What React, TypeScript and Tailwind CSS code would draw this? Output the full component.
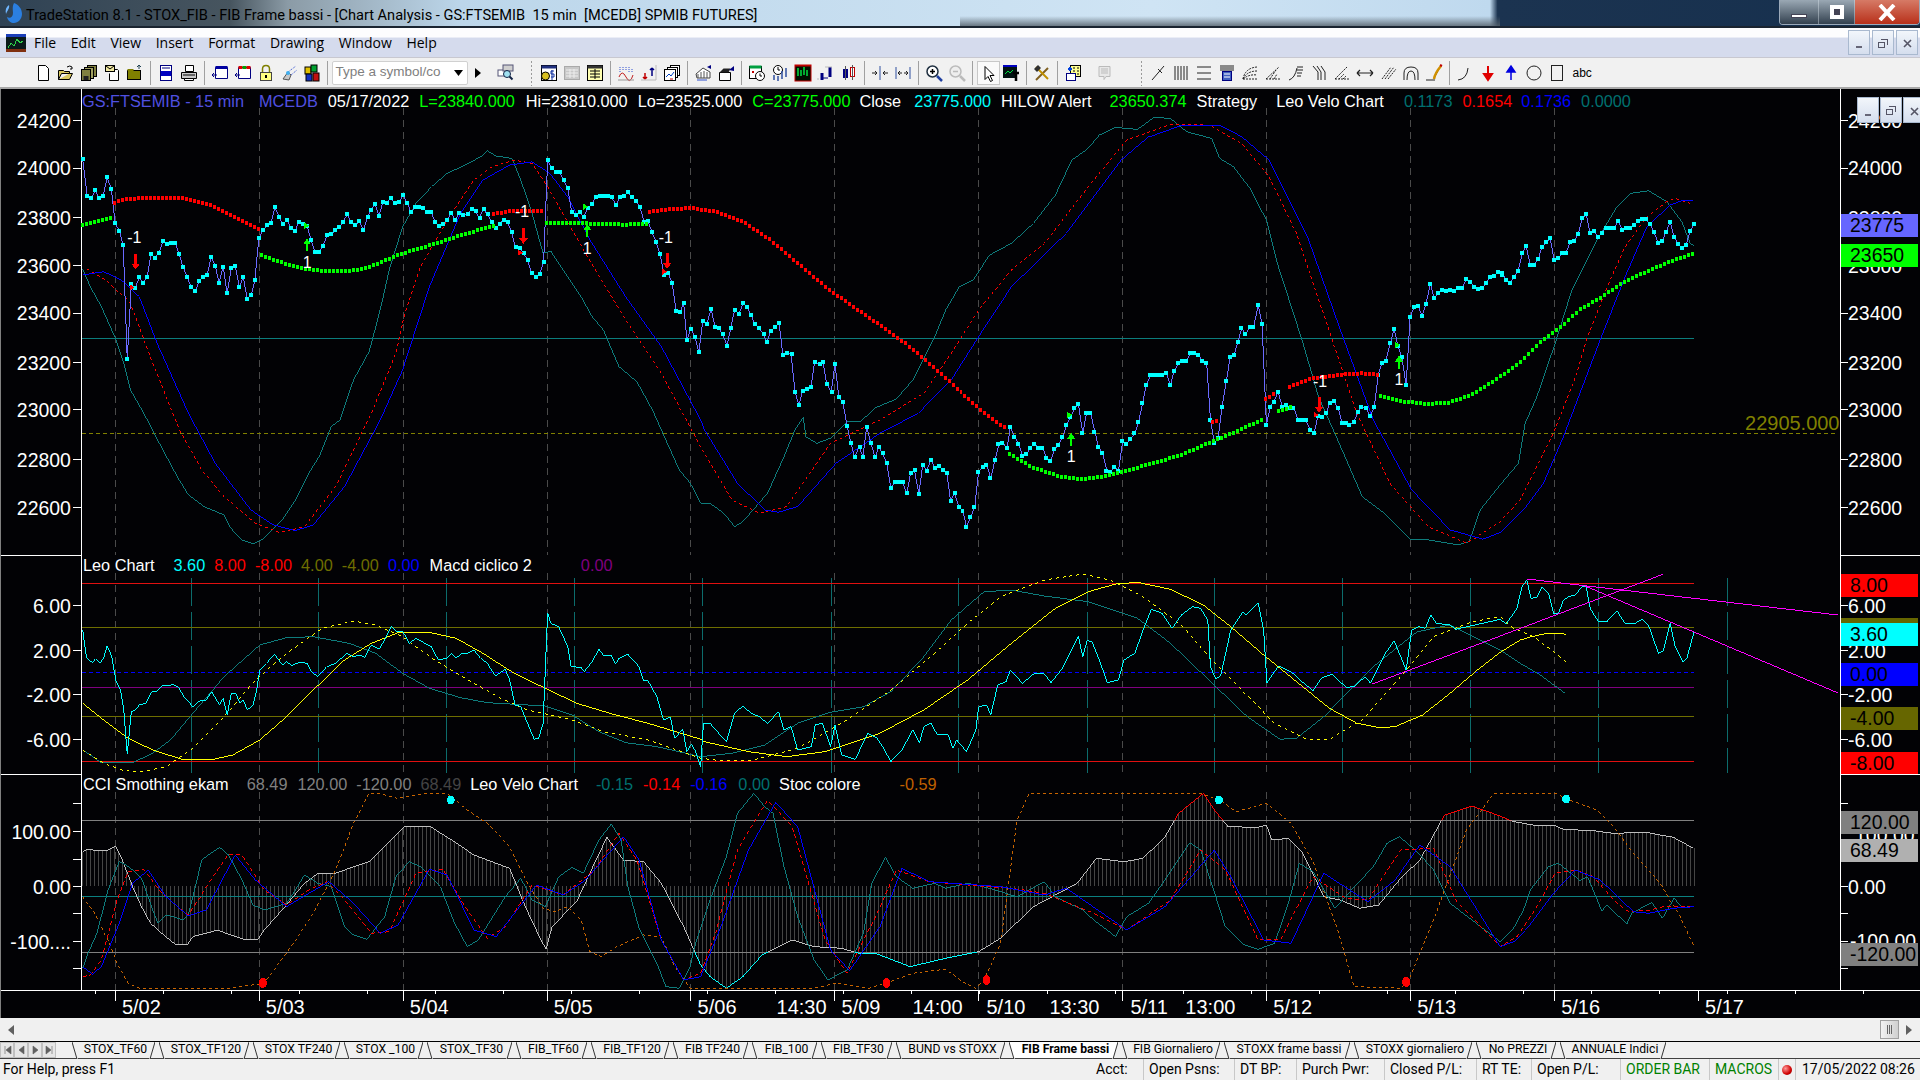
import { ReactNode } from "react";

type Pt = [number, number];

// traces were read off three crops of the chart, so each one comes in crop coordinates
const fromA = (a: number[], oy: number): Pt[] => pairs(a).map(([x, y]) => [x / 2.24, oy + y / 3]);
const fromB = (a: number[], oy: number): Pt[] => pairs(a).map(([x, y]) => [660 + (x * 860) / 1568, oy + y / 3]);
const fromC = (a: number[]): Pt[] => pairs(a).map(([x, y]) => [1500 + x / 3, 0 + y / 3]);

function pairs(a: number[]): Pt[] {
  const out: Pt[] = [];
  for (let i = 0; i + 1 < a.length; i += 2) out.push([a[i], a[i + 1]]);
  return out;
}

function join(...parts: Pt[][]): Pt[] {
  const out: Pt[] = [];
  parts.forEach((p) => p.forEach((q) => {
    if (!out.length || q[0] > out[out.length - 1][0]) out.push(q);
  }));
  return out;
}

const top3 = (a: number[], b: number[], c: number[]) => join(fromA(a, 80), fromB(b, 80), fromC(c).map(([x, y]) => [x, y + 80] as Pt));
const low3 = (a: number[], b: number[], c: number[]) => join(fromA(a, 550), fromB(b, 550), fromC(c).map(([x, y]) => [x, y + 560] as Pt));

const str = (p: Pt[]) => p.map(([x, y]) => `${x.toFixed(1)},${y.toFixed(1)}`).join(" ");

function yAt(p: Pt[], x: number) {
  for (let i = 1; i < p.length; i++) {
    if (x <= p[i][0]) {
      const t = (x - p[i - 1][0]) / (p[i][0] - p[i - 1][0]);
      return p[i - 1][1] + t * (p[i][1] - p[i - 1][1]);
    }
  }
  return p[p.length - 1][1];
}

function sample(p: Pt[]): Pt[] {
  const out: Pt[] = [];
  for (let x = p[0][0]; x <= p[p.length - 1][0]; x += 4) out.push([x, yAt(p, x)]);
  return out;
}

const price = top3(
  [183,236,193,347,202,355,211,331,220,355,229,347,238,292,247,326,256,430,265,452,274,495,283,838,292,613,301,623,310,592,319,608,328,590,336,523,345,533,354,519,363,482,372,492,381,488,390,488,399,521,408,561,417,590,426,622,435,634,444,604,453,592,462,585,471,532,480,558,489,608,498,560,507,640,516,563,525,557,534,622,543,592,552,657,561,645,569,601,578,473,587,451,596,435,605,430,614,381,623,410,632,433,641,420,650,445,659,452,668,425,677,432,686,438,695,480,704,516,713,515,722,497,731,466,740,463,749,451,758,440,767,425,776,403,785,425,794,435,803,424,812,451,821,412,829,390,838,372,847,408,856,367,865,368,874,354,883,370,892,367,901,346,910,368,919,397,928,380,937,381,946,385,955,395,964,397,973,425,982,438,991,431,1000,420,1009,400,1018,420,1027,398,1036,406,1045,401,1054,388,1063,393,1072,414,1081,388,1090,403,1099,425,1108,445,1117,432,1126,420,1135,425,1144,456,1153,502,1162,505,1171,518,1180,541,1189,578,1198,591,1207,583,1216,546,1225,240,1234,265,1243,275,1252,275,1261,300,1270,325,1279,397,1288,405,1297,395,1306,410,1315,385,1324,372,1333,350,1342,348,1351,347,1360,348,1369,352,1378,375,1387,352,1396,347,1405,337,1414,352,1423,362,1432,380,1441,425,1450,422,1459,456,1468,485,1477,522,1486,585,1495,578,1504,608,1513,692,1522,695,1530,670,1537,780,1546,748,1555,770,1564,815],
  [77,722,84,732,92,688,99,740,106,745,113,762,121,798,128,743,135,690,143,703,150,670,157,680,165,705,172,733,179,745,187,762,194,787,201,752,208,742,216,730,223,825,230,818,238,822,245,935,252,976,259,932,267,928,274,922,281,845,289,853,296,845,303,912,311,937,318,852,325,952,332,965,340,1037,347,1090,354,1132,362,1100,369,1130,376,1040,383,1088,391,1132,398,1102,405,1120,412,1148,420,1224,427,1207,434,1205,441,1207,449,1240,456,1180,463,1170,471,1242,478,1155,485,1172,493,1140,500,1165,507,1158,515,1170,522,1180,529,1263,536,1240,544,1280,551,1292,558,1340,566,1310,573,1280,580,1175,588,1160,595,1155,602,1195,610,1140,617,1092,624,1088,632,1105,638,1040,646,1072,653,1092,660,1128,668,1122,675,1103,682,1092,690,1104,697,1103,704,1135,711,1143,719,1108,726,1095,733,1072,741,1035,748,1010,755,985,762,972,770,1060,777,998,784,998,792,1055,799,1102,806,1120,814,1172,821,1177,828,1160,835,1172,843,1082,850,1092,857,1078,865,1060,872,1025,879,970,886,915,894,884,901,884,908,884,916,884,923,880,930,915,937,872,945,850,952,842,959,842,967,820,974,818,981,824,988,843,996,850,1003,1020,1010,1088,1017,1075,1024,980,1032,903,1039,830,1046,825,1053,785,1060,745,1067,762,1075,740,1082,740,1090,675,1097,732,1105,1035,1112,980,1119,965,1126,935,1134,980,1141,975,1148,985,1155,985,1163,1020,1170,1020,1177,1020,1185,1050,1192,1060,1199,1008,1207,1012,1214,1000,1221,968,1228,963,1236,985,1243,1028,1250,1030,1257,1035,1265,1025,1272,995,1279,982,1287,985,1294,1008,1302,980,1309,885,1316,850,1323,843,1331,790,1338,748,1345,798,1352,830,1360,915,1367,712,1374,682,1382,678,1389,708,1396,672,1404,612,1411,655,1418,638,1426,630,1433,632,1440,630,1447,633,1455,625,1462,625,1470,597,1477,605,1484,622,1491,628,1499,625,1506,610,1513,592,1521,587,1528,575,1535,585],
  [6,578,18,600,30,608,42,590,54,572,66,520,78,498,90,555,102,555,114,537,126,500,138,487,150,475,162,540,174,533,186,520,198,518,210,485,222,482,234,463,246,415,258,403,270,460,282,452,294,472,306,458,318,443,330,443,342,443,354,422,366,450,378,443,390,443,402,435,414,422,426,418,438,418,450,432,462,457,474,490,486,482,498,455,510,425,522,470,534,493,546,503,558,495,570,452,582,432],
);

const greens: Pt[][] = [
  fromA([183,435,205,428,228,420,250,411], 80),
  fromA([585,525,620,543,660,560,690,568,720,573,775,573,810,568,850,548,890,525,940,505,990,484,1040,462,1080,447,1108,437], 80),
  fromA([1222,429,1300,429,1340,432,1400,434,1450,431], 80),
  fromB([638,1122,680,1162,730,1190,770,1197,810,1190,850,1172,900,1150,950,1125,1000,1090,1050,1055,1100,1018], 80),
  fromB([1128,993,1155,980], 80),
  join(fromB([1315,947,1360,965,1400,972,1440,968,1480,945,1520,905,1568,850], 80), fromC([60,845,120,788,180,745,240,690,300,655,360,615,420,585,480,558,540,535,585,520]).map(([x, y]) => [x, y + 80] as Pt)),
];
const reds: Pt[][] = [
  fromA([255,368,280,358,320,353,370,353,400,354,430,360,470,376,510,400,550,430,580,448], 80),
  fromA([1105,402,1140,394,1180,392,1220,393], 80),
  join(fromA([1453,395,1500,388,1540,384], 80), fromB([60,385,100,395,150,425,200,480,250,550,300,620,350,680,400,735,450,795,500,865,550,940,600,1010,635,1050], 80)),
  fromB([1008,1025,1020,1022], 80),
  fromB([1105,958,1125,938], 80),
  fromB([1148,920,1190,895,1240,884,1280,880,1310,884], 80),
];

const topTeal = top3(
  [183,566,200,620,225,680,255,770,275,850,290,930,320,1000,345,1065,365,1115,395,1190,420,1245,455,1280,500,1305,515,1345,540,1380,565,1392,590,1375,630,1320,660,1260,690,1180,715,1125,740,1040,760,1020,790,900,825,815,840,740,855,660,870,570,900,440,930,370,965,320,1000,280,1040,255,1075,230,1090,212,1110,228,1145,235,1165,300,1190,400,1215,520,1232,513,1270,590,1300,650,1325,710,1350,750,1385,860,1425,905,1460,990,1490,1080,1520,1170,1545,1210,1568,1270],
  [90,1270,115,1300,135,1340,150,1325,195,1240,225,1130,245,1050,260,1012,265,1070,285,1090,310,1075,340,1025,365,1025,390,985,430,957,460,900,500,770,520,690,545,620,570,600,600,525,640,490,680,430,720,345,750,240,780,205,800,165,830,142,870,148,900,112,930,115,960,155,1005,175,1020,235,1045,260,1075,325,1105,420,1125,550,1170,780,1200,950,1235,1080,1280,1250,1320,1300,1368,1378,1400,1380,1455,1395,1475,1385,1495,1290],
  [0,1215,55,1150,75,1030,110,950,165,790,215,630,285,490,350,380,390,340,445,332,500,365,545,425,570,490,582,497],
);
const topRed = top3(
  [192,566,235,600,290,670,340,850,400,1050,450,1170,500,1250,570,1330,625,1358,680,1340,750,1220,830,1000,885,820,905,700,940,560,1000,420,1060,300,1100,260,1150,240,1190,250,1225,320,1310,520,1400,720,1480,880,1568,1100],
  [130,1260,180,1300,230,1280,310,1090,400,1020,480,940,530,820,580,690,640,570,700,490,790,300,850,180,930,133,1000,135,1060,190,1110,290,1160,460,1225,780,1270,1000,1330,1210,1400,1340,1470,1390],
  [0,1325,60,1260,160,1060,230,880,260,775,330,600,375,500,440,410,500,365,525,355,570,370],
);
const topBlue = top3(
  [183,585,230,575,270,600,310,650,350,790,420,1000,480,1150,560,1290,610,1335,660,1352,700,1335,770,1220,850,1020,900,870,960,620,1030,400,1080,300,1140,255,1190,245,1230,280,1270,350,1320,480,1400,650,1480,800,1568,1020],
  [80,1050,140,1210,190,1290,215,1297,250,1280,320,1150,400,1060,470,1000,530,900,580,770,640,620,740,460,840,240,890,170,950,135,1020,135,1060,170,1110,240,1180,470,1240,750,1300,1020,1370,1230,1440,1350,1500,1378],
  [0,1358,70,1290,130,1210,190,1070,300,780,375,590,440,440,510,375,550,360,580,362],
);

const midCyan = low3(
  [183,240,192,325,205,338,212,326,222,338,230,325,238,287,248,318,258,395,268,420,275,480,283,612,292,485,301,480,310,465,325,460,338,425,348,425,362,405,375,408,385,403,398,412,410,440,430,470,445,453,460,450,472,425,490,465,498,445,507,495,516,430,527,432,535,460,543,450,552,480,565,465,573,420,580,360,595,340,613,312,625,335,632,345,640,335,652,347,668,337,686,340,695,365,710,380,730,350,750,340,775,310,790,320,805,315,815,322,830,285,848,298,875,230,885,243,900,243,915,280,930,265,950,280,965,290,980,330,1000,325,1010,310,1020,325,1030,312,1045,310,1060,300,1075,325,1090,340,1108,378,1130,358,1140,390,1152,465,1165,470,1180,520,1195,568,1205,565,1215,520,1225,188,1232,220,1250,230,1270,290,1278,350,1300,352,1307,365,1325,335,1340,298,1350,315,1368,316,1377,343,1385,325,1405,313,1430,350,1440,392,1450,392,1470,440,1485,510,1500,500,1510,565,1528,538,1537,605,1547,583,1555,600,1568,650],
  [78,520,90,520,105,548,120,575,135,490,150,468,165,490,180,500,195,520,215,485,225,540,238,530,250,600,275,590,282,525,295,520,310,590,318,525,330,615,355,628,378,550,395,565,405,590,420,635,440,600,460,540,472,580,480,530,493,520,505,555,525,555,533,595,540,570,558,605,575,540,580,470,595,465,602,495,615,405,630,395,638,360,660,400,682,370,700,372,712,398,733,355,762,258,770,320,778,272,787,275,800,330,815,398,835,390,845,330,865,310,880,240,895,178,915,190,933,235,950,195,970,170,985,175,998,210,1003,350,1013,388,1022,375,1040,240,1062,185,1068,195,1090,160,1100,240,1106,398,1127,348,1150,365,1170,395,1190,422,1205,385,1225,372,1250,412,1265,410,1285,380,1295,400,1320,315,1338,272,1360,360,1370,240,1382,230,1395,235,1405,195,1415,220,1440,225,1450,238],
  [0,178,18,192,50,145,65,80,80,60,92,115,110,112,125,80,145,100,160,160,175,160,190,120,205,110,225,105,245,80,258,80,270,145,295,185,320,185,350,152,375,190,405,190,425,178,445,195,475,280,490,272,510,190,525,260,548,305,560,295,582,215],
);
const midYellow = low3(
  [183,460,230,510,285,565,340,600,410,630,470,630,520,615,580,570,640,500,700,420,770,330,830,280,890,248,960,247,1020,265,1080,310,1150,370,1220,415,1290,460,1370,492,1450,520,1568,568],
  [80,575,160,605,230,620,300,605,400,550,480,480,560,390,640,280,720,175,780,125,830,102,870,97,930,118,990,165,1040,230,1100,315,1160,395,1220,475,1270,520,1310,533,1340,530,1390,495,1440,430,1490,360],
  [0,277,60,240,100,228,140,220,180,220,198,223],
);
const midYellowDash = low3(
  [183,600,230,640,270,660,310,667,370,650,430,595,500,500,570,390,640,310,720,235,790,213,840,225,900,260,960,320,1040,385,1120,445,1180,480,1280,510,1350,545,1450,570,1568,625],
  [110,632,170,630,250,595,340,510,420,420,500,310,560,220,620,140,700,90,770,72,820,90,880,140,950,225,1000,320,1060,420,1120,520,1180,570,1220,568,1280,510,1350,380,1410,260,1480,215],
  [0,170,40,205,100,230,160,275,198,307],
);
const midTeal = low3(
  [183,600,225,638,295,638,340,610,380,570,430,490,500,380,580,285,640,263,700,260,780,280,840,310,900,370,960,415,1030,443,1090,458,1150,463,1220,468,1280,495,1340,545,1400,578,1470,590,1568,620],
  [130,610,190,585,250,520,310,487,370,470,420,425,480,320,530,210,590,125,640,120,700,138,780,155,870,205,930,280,1000,390,1070,500,1130,568,1160,565,1210,500,1300,350,1380,245,1440,225],
  [0,270,60,310,120,345,195,400],
);

const cci = low3(
  [183,905,195,897,215,902,240,900,257,888,272,930,295,1010,315,1070,335,1120,360,1150,392,1185,418,1183,430,1160,460,1150,485,1140,515,1155,550,1170,575,1170,590,1140,630,1080,680,1000,710,970,750,970,790,950,825,935,860,890,905,830,960,828,1010,870,1060,915,1100,935,1140,955,1175,1070,1210,1170,1222,1197,1235,1130,1290,1055,1330,940,1358,862,1395,930,1440,935,1480,1000,1530,1130,1568,1245],
  [90,1280,120,1315,150,1280,185,1215,240,1170,280,1190,330,1195,365,1212,395,1212,455,1250,520,1225,580,1205,620,1165,680,1070,720,1035,760,1000,795,925,845,935,880,925,920,860,945,790,990,730,1010,780,1035,830,1090,832,1105,825,1115,870,1145,865,1170,905,1210,1040,1240,1050,1275,1075,1310,1065,1350,985,1385,930,1430,795,1480,768],
  [0,768,40,785,100,795,160,795,190,808,280,812,340,820,440,817,480,825,520,832,580,865],
);
const lowTeal = low3(
  [183,1255,195,1210,215,1150,240,1020,265,935,280,945,295,960,315,985,340,1080,352,1120,370,1095,385,1100,407,1110,420,1095,450,930,470,910,490,892,510,915,540,990,565,1065,590,1080,615,1070,640,1060,660,1020,680,975,710,1000,740,1010,770,1130,790,1155,820,1168,860,1100,885,980,915,935,940,950,985,1010,1015,1115,1045,1190,1070,1170,1100,1105,1130,1040,1165,985,1190,1050,1220,1070,1250,980,1280,952,1305,970,1340,870,1368,822,1390,870,1405,1010,1430,1135,1470,1240,1490,1310,1520,1315,1545,1250],
  [45,1290,60,1200,90,1050,120,920,140,790,170,730,190,770,205,790,225,950,250,1100,280,1230,305,1290,340,1260,370,1150,385,1000,410,922,430,980,460,1015,500,1000,520,1015,560,1000,600,1015,650,1040,700,995,720,1040,770,1080,790,1110,830,1160,850,1100,890,1060,920,990,965,878,985,900,1005,1000,1030,1130,1065,1185,1090,1198,1120,1180,1145,1060,1165,940,1190,965,1230,1075,1260,1020,1300,950,1325,880,1348,860,1380,905,1410,960,1440,1060],
  [0,1145,40,1105,70,1050,90,990,145,920,175,910,240,962,262,950,305,1053,320,1035,380,1092,395,1060,455,1027,487,1075,522,1015,545,1042,582,1040],
);
const lowRed = low3(
  [183,1280,200,1275,225,1230,260,1050,285,965,320,958,360,1030,420,1095,465,1000,510,912,540,915,590,1020,640,1065,690,1020,730,995,770,1050,830,1150,870,1145,930,970,990,957,1040,1070,1090,1165,1130,1130,1190,1005,1260,1035,1330,960,1385,850,1425,930,1480,1170,1530,1290,1568,1270],
  [100,1150,140,900,195,750,240,830,300,1170,340,1270,395,1090,430,960,490,995,560,1005,640,1015,700,1030,790,1090,850,1140,930,1050,985,900,1030,960,1090,1170,1130,1170,1190,980,1250,1045,1290,1050,1350,900,1410,895,1450,1050],
  [0,1160,50,1130,110,1040,165,940,225,930,280,950,340,1020,385,1055,450,1050,490,1040,582,1040],
);
const lowBlue = low3(
  [183,1250,205,1273,225,1250,265,1120,295,1000,330,960,370,1040,420,1098,460,1080,525,915,570,990,640,1070,690,1030,735,995,790,1060,850,1150,890,1125,960,957,1000,975,1060,1140,1110,1160,1200,1005,1260,1035,1310,990,1395,860,1430,930,1480,1170,1530,1290,1568,1280],
  [110,1130,160,900,210,757,250,830,310,1200,345,1262,400,1130,440,955,490,995,620,1010,700,1035,740,1015,850,1140,920,1070,1010,900,1040,980,1100,1170,1150,1180,1210,970,1290,1055,1340,990,1385,885,1440,950],
  [0,1160,40,1145,85,1100,160,1000,225,930,300,960,400,1055,445,1060,520,1045,582,1040],
);
const stoc = low3(
  [183,1040,210,1090,240,1170,260,1240,285,1300,310,1315,510,1315,590,1300,650,1190,700,1090,750,960,790,820,825,730,850,730,885,745,950,730,1000,730,1045,780,1095,825,1140,890,1180,1000,1215,1075,1240,1085,1270,1070,1300,1110,1320,1205,1345,1220,1380,1190,1440,1155,1480,1160,1510,1250,1545,1315,1568,1315],
  [280,1315,320,1300,380,1315,410,1300,460,1270,520,1258,555,1300,575,1315,590,1290,620,1180,650,810,672,730,985,730,1020,750,1050,785,1105,760,1150,820,1190,935,1235,1140,1265,1310,1350,1315,1365,1290,1410,1110,1470,840,1520,730],
  [0,700,165,700,200,717,290,750,340,800,400,880,480,970,540,1070,582,1160],
);

const dayLines = [115, 259, 403, 547, 690, 834, 978, 1122, 1266, 1410, 1554];
const cycleLines = [190.5, 318, 446, 574, 702, 830.5, 958, 1087, 1214.5, 1342, 1470.5, 1598, 1727];

function Poly({ p, c, d, w = 1 }: { p: Pt[]; c: string; d?: string; w?: number }) {
  return <polyline points={str(p)} fill="none" stroke={c} strokeWidth={w} strokeDasharray={d} />;
}

function HLine({ y, c, x2 = 1694, d }: { y: number; c: string; x2?: number; d?: string }) {
  return <line x1={81} x2={x2} y1={y} y2={y} stroke={c} strokeDasharray={d} />;
}

function DayLines({ y1, y2 }: { y1: number; y2: number }) {
  return (
    <>
      {dayLines.map((x) => (
        <line key={x} x1={x} x2={x} y1={y1} y2={y2} stroke="#4a4a4a" strokeDasharray="7 5" />
      ))}
    </>
  );
}

function AxisLabel({ x, y, t, anchor }: { x: number; y: number; t: string; anchor?: "end" | "start" }) {
  return <text x={x} y={y + 7} fill="#fff" fontSize={19.5} textAnchor={anchor}>{t}</text>;
}

function Tag({ y, bg, t, h = 23 }: { y: number; bg: string; t: string; h?: number }) {
  return (
    <g>
      <rect x={1841} y={y} width={77} height={h} fill={bg} />
      <text x={1850} y={y + 18} fill="#000" fontSize={19.5}>{t}</text>
    </g>
  );
}

function Frame({ y, children }: { y: number; children: ReactNode }) {
  return (
    <>
      <line x1={80.5} x2={80.5} y1={y} y2={1000} stroke="#fff" />
      <line x1={1840.5} x2={1840.5} y1={y} y2={1000} stroke="#fff" />
      {children}
    </>
  );
}

function DownArrow({ x, y }: { x: number; y: number }) {
  return <path d={`M${x - 1.5} ${y}h3v9.5h3l-4.5 6-4.5-6h3z`} fill="#ff0000" />;
}

function UpArrow({ x, y }: { x: number; y: number }) {
  return <path d={`M${x} ${y}l4 6h-3v7h-2v-7h-3z`} fill="#00ff00" />;
}

function Legend({ items }: { items: [string, string, string][] }) {
  return (
    <div className="absolute left-0 top-0 flex w-full items-center whitespace-nowrap text-[16.3px] leading-none">
      {items.map(([t, color, cls], i) => (
        <span key={i} className={`${cls} ${color}`}>{t}</span>
      ))}
    </div>
  );
}

function TopPanel() {
  const a7 = (x: number) => x / 2.24;
  const a9 = (x: number) => 660 + (x * 860) / 1568;
  const y3 = (y: number) => 80 + y / 3;
  return (
    <div className="relative h-[466px]">
      <svg className="block h-full w-full" viewBox="0 89 1920 466" shapeRendering="crispEdges">
        <Frame y={89}>
          <DayLines y1={108} y2={555} />
          <HLine y={339} c="#0b7d7d" />
          <HLine y={434} c="#808000" x2={1837} d="4 3" />
          <Poly p={topTeal} c="#0e7c7c" />
          <Poly p={topRed} c="#ff0000" d="3 3" />
          <Poly p={topBlue} c="#0000ff" />
          <Poly p={price} c="#6a6aff" />
          {price.map(([x, y], i) => <rect key={i} x={Math.round(x) - 2} y={Math.round(y) - 2} width={4} height={4} fill="#00ffff" />)}
          {greens.map((g, i) => sample(g).map(([x, y], j) => <rect key={`${i}-${j}`} x={Math.round(x) - 2} y={Math.round(y) - 2} width={3} height={4} fill="#00ff00" />))}
          {reds.map((g, i) => sample(g).map(([x, y], j) => <rect key={`${i}-${j}`} x={Math.round(x) - 2} y={Math.round(y) - 2} width={3} height={4} fill="#ff0000" />))}
          {[[a7(680), y3(437)], [a7(1305), y3(380)], [a9(742), y3(1005)], [a9(1340), y3(795)]].map(([x, y]) => (
            <path key={x} d={`M${x} ${y - 3}l5 3-5 3z`} fill="#00ff00" />
          ))}
          {[[a7(293), y3(622)], [a7(1163), y3(518)], [a7(1487), y3(575)], [a9(1195), y3(1005)]].map(([x, y]) => (
            <path key={x} d={`M${x - 2} ${y - 3}l5 3-5 3z`} fill="#ff0000" />
          ))}
          <DownArrow x={a7(302)} y={y3(522)} />
          <DownArrow x={a7(1171)} y={y3(445)} />
          <DownArrow x={a7(1493)} y={y3(520)} />
          <DownArrow x={a9(1201)} y={y3(952)} />
          <UpArrow x={a7(686)} y={y3(475)} />
          <UpArrow x={a7(1314)} y={y3(432)} />
          <UpArrow x={a9(749)} y={y3(1058)} />
          <UpArrow x={a9(1347)} y={y3(827)} />
          <g fill="#fff" fontSize={16} textAnchor="middle">
            <text x={a7(299)} y={y3(490)}>-1</text>
            <text x={a7(1168)} y={y3(412)}>-1</text>
            <text x={a7(1490)} y={y3(488)}>-1</text>
            <text x={a9(1203)} y={y3(920)}>-1</text>
            <text x={a7(686)} y={y3(565)}>1</text>
            <text x={a7(1314)} y={y3(522)}>1</text>
            <text x={a9(749)} y={y3(1146)}>1</text>
            <text x={a9(1347)} y={y3(915)}>1</text>
          </g>
          <text x={1745} y={430} fill="#808000" fontSize={20}>22905.000</text>
          {[[24200, 120.7], [24000, 168.3], [23800, 217.7], [23600, 265.7], [23400, 313.3], [23200, 362.7], [23000, 410], [22800, 459.7], [22600, 507.7]].map(([v, y]) => (
            <g key={v}>
              <line x1={72} x2={80} y1={y} y2={y} stroke="#fff" />
              <line x1={1841} x2={1848} y1={y} y2={y} stroke="#fff" />
              <AxisLabel x={70} y={y} t={String(v)} anchor="end" />
              <AxisLabel x={1848} y={y} t={String(v)} />
            </g>
          ))}
          <Tag y={214} bg="#6666ff" t="23775" />
          <Tag y={244} bg="#00ff00" t="23650" />
        </Frame>
      </svg>
      <Legend
        items={[
          ["GS:FTSEMIB - 15 min", "text-[#5050e0]", "ml-[81px] mt-[4px]"],
          ["MCEDB", "text-[#5050e0]", "ml-[15px] mt-[4px]"],
          ["05/17/2022", "text-white", "ml-[10px] mt-[4px]"],
          ["L=23840.000", "text-[#00ff00]", "ml-[10px] mt-[4px]"],
          ["Hi=23810.000", "text-white", "ml-[11px] mt-[4px]"],
          ["Lo=23525.000", "text-white", "ml-[10px] mt-[4px]"],
          ["C=23775.000", "text-[#00ff00]", "ml-[10px] mt-[4px]"],
          ["Close", "text-white", "ml-[9px] mt-[4px]"],
          ["23775.000", "text-[#00ffff]", "ml-[13px] mt-[4px]"],
          ["HILOW Alert", "text-white", "ml-[10px] mt-[4px]"],
          ["23650.374", "text-[#00ff00]", "ml-[18px] mt-[4px]"],
          ["Strategy", "text-white", "ml-[10px] mt-[4px]"],
          ["Leo Velo Chart", "text-white", "ml-[19px] mt-[4px]"],
          ["0.1173", "text-[#007070]", "ml-[20px] mt-[4px]"],
          ["0.1654", "text-[#ff0000]", "ml-[10px] mt-[4px]"],
          ["0.1736", "text-[#0000ff]", "ml-[9px] mt-[4px]"],
          ["0.0000", "text-[#007070]", "ml-[10px] mt-[4px]"],
        ]}
      />
      <div className="absolute right-0 top-[8px] flex h-[26px] w-[63px] gap-[1px] overflow-hidden">
        <MiniBtn>
          <span className="mt-[9px] h-[2px] w-[6px] bg-[#667]" />
        </MiniBtn>
        <MiniBtn>
          <RestoreGlyph />
        </MiniBtn>
        <MiniBtn>
          <CloseGlyph />
        </MiniBtn>
      </div>
    </div>
  );
}

function MidPanel() {
  return (
    <div className="relative h-[219px]">
      <svg className="block h-full w-full" viewBox="0 555 1920 219" shapeRendering="crispEdges">
        <Frame y={555}>
          <line x1={0} x2={81} y1={555.5} y2={555.5} stroke="#fff" />
          <line x1={1840} x2={1920} y1={555.5} y2={555.5} stroke="#fff" />
          <DayLines y1={573} y2={774} />
          {cycleLines.map((x) => <line key={x} x1={x} x2={x} y1={578} y2={773} stroke="#0c6c6c" strokeDasharray="28 6" />)}
          <HLine y={583.5} c="#e01010" />
          <HLine y={627.5} c="#6e6e00" />
          <HLine y={672.5} c="#0000ff" d="4 3" />
          <HLine y={687.5} c="#800080" />
          <HLine y={716.5} c="#6e6e00" />
          <HLine y={761.5} c="#e01010" />
          <Poly p={midTeal} c="#0e7c7c" />
          <Poly p={midYellowDash} c="#ffff00" d="3 4" />
          <Poly p={midYellow} c="#ffff00" />
          <Poly p={midCyan} c="#00ffff" />
          <Poly p={[[1372, 684], [1500, 636], [1662.7, 574.3]]} c="#ff00ff" />
          <Poly p={[[1527, 579], [1838, 615]]} c="#ff00ff" />
          <Poly p={[[1585, 586], [1838, 693]]} c="#ff00ff" />
          {[[6, 605.5], [2, 650.5], [-2, 695], [-6, 740]].map(([v, y]) => {
            const t = `${v.toFixed(2)}`;
            return (
              <g key={v}>
                <line x1={72} x2={80} y1={y} y2={y} stroke="#fff" />
                <line x1={1841} x2={1848} y1={y} y2={y} stroke="#fff" />
                <AxisLabel x={70} y={y} t={t} anchor="end" />
                <AxisLabel x={1848} y={y} t={t} />
              </g>
            );
          })}
          <Tag y={574} bg="#ff0000" t="8.00" />
          <rect x={1841} y={618} width={77} height={6} fill="#666600" />
          <Tag y={623} bg="#00ffff" t="3.60" />
          <Tag y={663} bg="#0000ff" t="0.00" />
          <Tag y={707} bg="#666600" t="-4.00" />
          <Tag y={752} bg="#ff0000" t="-8.00" />
        </Frame>
      </svg>
      <Legend
        items={[
          ["Leo Chart", "text-white", "ml-[82px] mt-[2px]"],
          ["3.60", "text-[#00ffff]", "ml-[19px] mt-[2px]"],
          ["8.00", "text-[#ff0000]", "ml-[9px] mt-[2px]"],
          ["-8.00", "text-[#ff0000]", "ml-[9px] mt-[2px]"],
          ["4.00", "text-[#6e6e00]", "ml-[9px] mt-[2px]"],
          ["-4.00", "text-[#6e6e00]", "ml-[9px] mt-[2px]"],
          ["0.00", "text-[#0000ff]", "ml-[9px] mt-[2px]"],
          ["Macd ciclico 2", "text-white", "ml-[10px] mt-[2px]"],
          ["0.00", "text-[#800080]", "ml-[49px] mt-[2px]"],
        ]}
      />
    </div>
  );
}

function LowPanel() {
  const bars: ReactNode[] = [];
  for (let x = 82; x < 1695; x += 4) {
    bars.push(<line key={x} x1={x} x2={x} y1={886} y2={yAt(cci, x)} stroke="#444444" />);
  }
  return (
    <div className="relative h-[216px]">
      <svg className="block h-full w-full" viewBox="0 774 1920 216" shapeRendering="crispEdges">
        <defs>
          <clipPath id="overbought"><rect x={81} y={774} width={1620} height={46.3} /></clipPath>
          <clipPath id="oversold"><rect x={81} y={952} width={1620} height={38} /></clipPath>
        </defs>
        <Frame y={774}>
          <line x1={0} x2={81} y1={774.5} y2={774.5} stroke="#fff" />
          <line x1={1840} x2={1920} y1={774.5} y2={774.5} stroke="#fff" />
          <DayLines y1={792} y2={990} />
          {bars}
          <HLine y={820.5} c="#808080" />
          <HLine y={896.5} c="#0b8080" />
          <HLine y={952.5} c="#808080" />
          <Poly p={cci} c="#bdbdbd" />
          <g clipPath="url(#overbought)"><Poly p={cci} c="#ff0000" /></g>
          <g clipPath="url(#oversold)"><Poly p={cci} c="#00ffff" /></g>
          <Poly p={stoc} c="#c86400" d="3 3" />
          <Poly p={lowTeal} c="#0e7c7c" />
          <Poly p={lowRed} c="#ff0000" d="4 3" />
          <Poly p={lowBlue} c="#0000ff" />
          {[[450, 800], [1218.5, 800], [1566, 799]].map(([x, y]) => <ellipse key={x} cx={x} cy={y} rx={4} ry={4.5} fill="#00ffff" />)}
          {[[262, 983], [886, 983], [986, 980], [1406, 982]].map(([x, y]) => <ellipse key={x} cx={x} cy={y} rx={4} ry={5} fill="#ff0000" />)}
          {[803, 831.7, 859, 886.7, 914, 941.7, 969].map((y) => (
            <g key={y}>
              <line x1={72} x2={80} y1={y} y2={y} stroke="#fff" />
              <line x1={1841} x2={1848} y1={y} y2={y} stroke="#fff" />
            </g>
          ))}
          <AxisLabel x={70} y={831.7} t="100.00" anchor="end" />
          <AxisLabel x={70} y={886.7} t="0.00" anchor="end" />
          <AxisLabel x={70} y={941.7} t="-100...." anchor="end" />
          <AxisLabel x={1855} y={835} t="100.00" />
          <AxisLabel x={1848} y={886.7} t="0.00" />
          <AxisLabel x={1850} y={941} t="-100.00" />
          <Tag y={811} bg="#808080" t="120.00" />
          <Tag y={839} bg="#b0b0b0" t="68.49" />
          <Tag y={943} bg="#808080" t="-120.00" />
        </Frame>
      </svg>
      <Legend
        items={[
          ["CCI Smothing ekam", "text-white", "ml-[82px] mt-[2px]"],
          ["68.49", "text-[#808080]", "ml-[18px] mt-[2px]"],
          ["120.00", "text-[#808080]", "ml-[10px] mt-[2px]"],
          ["-120.00", "text-[#808080]", "ml-[9px] mt-[2px]"],
          ["68.49", "text-[#444444]", "ml-[9px] mt-[2px]"],
          ["Leo Velo Chart", "text-white", "ml-[9px] mt-[2px]"],
          ["-0.15", "text-[#007070]", "ml-[18px] mt-[2px]"],
          ["-0.14", "text-[#ff0000]", "ml-[10px] mt-[2px]"],
          ["-0.16", "text-[#0000ff]", "ml-[10px] mt-[2px]"],
          ["0.00", "text-[#007070]", "ml-[11px] mt-[2px]"],
          ["Stoc colore", "text-white", "ml-[9px] mt-[2px]"],
          ["-0.59", "text-[#c06000]", "ml-[39px] mt-[2px]"],
        ]}
      />
    </div>
  );
}

const timeLabels: [number, string][] = [
  [121, "5/02"], [265, "5/03"], [409, "5/04"], [553, "5/05"], [697, "5/06"], [776, "14:30"], [841, "5/09"], [912, "14:00"],
  [986, "5/10"], [1049, "13:30"], [1130, "5/11"], [1185, "13:00"], [1273, "5/12"], [1417, "5/13"], [1561, "5/16"], [1705, "5/17"],
];

function TimeAxis() {
  const minor: number[] = [];
  for (let x = 95; x < 1900; x += 68) minor.push(x);
  return (
    <div className="h-[28px]">
      <svg className="block h-full w-full" viewBox="0 990 1920 28" shapeRendering="crispEdges">
        <line x1={0} x2={1920} y1={990.5} y2={990.5} stroke="#fff" />
        {minor.map((x) => <line key={x} x1={x} x2={x} y1={990} y2={994} stroke="#fff" />)}
        {[...dayLines, 1698].map((x) => <line key={x} x1={x} x2={x} y1={990} y2={1001} stroke="#fff" />)}
        {timeLabels.map(([x, t]) => <text key={t} x={x} y={1014} fill="#fff" fontSize={20}>{t}</text>)}
      </svg>
    </div>
  );
}

function RestoreGlyph() {
  return (
    <svg width="10" height="10" viewBox="0 0 10 10" className="mt-[2px]" shapeRendering="crispEdges">
      <path d="M3 .5h6v5M.5 3.5h5.5v5h-5.5z" fill="none" stroke="#556" />
    </svg>
  );
}

function CloseGlyph() {
  return (
    <svg width="9" height="9" viewBox="0 0 9 9" className="mt-[2px]">
      <path d="M1 1l7 7M8 1l-7 7" stroke="#556" strokeWidth="1.6" />
    </svg>
  );
}

function MiniBtn({ children }: { children: ReactNode }) {
  return (
    <div className="flex h-full w-[22px] flex-none items-center justify-center border border-[#a9b9cf] bg-[linear-gradient(#f2f6fb,#d5deee)]">
      {children}
    </div>
  );
}

function TitleBar() {
  return (
    <div className="relative h-[28px] overflow-hidden bg-[linear-gradient(90deg,#2f4254_0%,#47555f_12%,#8b9ba6_15%,#bcd6ea_24%,#cfe4f4_60%,#bfd9ee_77.6%,#1b3350_78%,#16304e_100%)]">
      <div className="absolute bottom-0 left-[960px] h-[12px] w-[540px] bg-[linear-gradient(#b9cfdf00,#56626c)]" />
      <div className="absolute inset-x-0 bottom-0 h-[2px] bg-[#1a2430]" />
      <div className="relative flex h-[25px] items-center">
        <svg width="20" height="22" viewBox="0 0 20 22" className="ml-[4px]">
          <path d="M10 1c5 2 8 6 8 11 0 5-4 9-8 9-3 0-6-2-7-6 3 2 6 0 6-4 0-3-1-6 1-10z" fill="#2b7fe0" />
          <path d="M5 3c1 3-2 6-3 9-1-4 0-7 3-9z" fill="#6fb6ff" />
        </svg>
        <span className="ml-[2px] mt-[6px] whitespace-pre font-['Roboto',sans-serif] text-[14.6px] text-black">
          TradeStation 8.1 - STOX_FIB - FIB Frame bassi - [Chart Analysis - GS:FTSEMIB  15 min  [MCEDB] SPMIB FUTURES]
        </span>
        <div className="ml-auto flex h-[25px] w-[141px] self-start overflow-hidden rounded-b-[4px] border border-t-0 border-[#dfe8f0aa]">
          <div className="flex w-[39px] items-center justify-center border-r border-[#dfe8f066] bg-[linear-gradient(#9aa8b4,#33414f)]">
            <span className="mt-[8px] h-[4px] w-[16px] border border-[#445] bg-white" />
          </div>
          <div className="flex w-[36px] items-center justify-center border-r border-[#dfe8f066] bg-[linear-gradient(#9aa8b4,#33414f)]">
            <span className="h-[14px] w-[14px] border-[4px] border-white bg-[#445]" />
          </div>
          <div className="flex flex-1 items-center justify-center bg-[linear-gradient(#d67a66,#b8301a)]">
            <svg width="20" height="17" viewBox="0 0 20 17">
              <path d="M3 1l14 15M17 1l-14 15" stroke="#fff" strokeWidth="4" />
            </svg>
          </div>
        </div>
      </div>
    </div>
  );
}

function MenuBar() {
  const items = ["File", "Edit", "View", "Insert", "Format", "Drawing", "Window", "Help"];
  return (
    <div className="flex h-[29px] items-center bg-[linear-gradient(#fdfdfe_0%,#fdfdfe_30%,#d5dbed_36%,#d5dbed_100%)] font-['Open_Sans',sans-serif] text-[14px] text-black">
      <svg width="20" height="18" viewBox="0 0 20 18" className="ml-[6px] mr-[8px]" shapeRendering="crispEdges">
        <rect width="20" height="18" fill="#0a1a1a" />
        <rect width="20" height="3" fill="#1c3fb8" />
        <path d="M2 14l3-5 3 3 3-7 3 4 3-2" fill="none" stroke="#2fd04a" />
        <rect x="0" y="15" width="20" height="3" fill="#803010" />
      </svg>
      <div className="flex gap-[14.7px]">
        {items.map((m) => <span key={m}>{m}</span>)}
      </div>
      <div className="ml-auto mr-[2px] mt-[2px] flex h-[25px] gap-[2px] self-start">
        <MiniBtn><span className="mt-[9px] h-[2px] w-[6px] bg-[#667]" /></MiniBtn>
        <MiniBtn><RestoreGlyph /></MiniBtn>
        <MiniBtn><CloseGlyph /></MiniBtn>
      </div>
    </div>
  );
}

const ink = "#000";
const icons: Record<string, ReactNode> = {
  doc: <path d="M4.5 1.5h7l3 3v12h-10z" fill="#fff" stroke={ink} />,
  open: <><path d="M1.5 15.5v-9h5l1 1h5v2h-8l-3 6h11l3-6h-3" fill="#d8c860" stroke={ink} /><path d="M10 3q3-2 5 0M15 3v2h-2" fill="none" stroke={ink} /></>,
  stack: <><rect x="7.5" y="1.5" width="9" height="11" fill="#808040" stroke={ink} /><rect x="4.5" y="3.5" width="9" height="11" fill="#a0a060" stroke={ink} /><rect x="1.5" y="5.5" width="9" height="11" fill="#808040" stroke={ink} /><rect x="3.5" y="12" width="5" height="4" fill="#222" /></>,
  mail: <><path d="M3.5 5.5h11l1 1v10h-9v-7" fill="#fff" stroke={ink} /><rect x="2.5" y="1.5" width="9" height="6" fill="#f0e8a0" stroke={ink} /><path d="M3 2l4 3 4-3" fill="none" stroke={ink} /></>,
  box: <><rect x="1.5" y="6.5" width="13" height="9" fill="#808000" stroke={ink} /><rect x="1.5" y="5" width="6" height="2" fill="#808000" /><path d="M13 5V1M13 1l-2 2M13 1l2 2" stroke="#245" fill="none" /></>,
  print: <><rect x="3.5" y="1.5" width="11" height="15" fill="#fff" stroke="#000080" /><rect x="4" y="7" width="10" height="5" fill="#0000c0" /><path d="M5 4h8" stroke="#000080" /></>,
  printer: <><path d="M5.5 1.5h8v6h-8z" fill="#fff" stroke={ink} /><path d="M1.5 8.5h15v6h-15z" fill="#c8c8c8" stroke={ink} /><path d="M4.5 14.5h9v2h-9z" fill="#fff" stroke={ink} /><path d="M3 11h12" stroke={ink} /></>,
  winNew: <><path d="M4.5 3.5h12v11h-12z" fill="#fff" stroke="#000080" /><rect x="4.5" y="2" width="12" height="3" fill="#0000a0" /><path d="M1 11h5M1 11l2-2M1 11l2 2" stroke="#000080" fill="none" /></>,
  winColor: <><path d="M4.5 3.5h12v11h-12z" fill="#fff" stroke="#000080" /><rect x="4.5" y="2" width="4" height="3" fill="#e00000" /><rect x="8.5" y="2" width="4" height="3" fill="#00a000" /><rect x="12.5" y="2" width="4" height="3" fill="#e00000" /><path d="M1 11h5M1 11l2-2M1 11l2 2" stroke="#000080" fill="none" /></>,
  lock: <><path d="M5.5 8V5q0-3.5 3.5-3.5T12.5 5v3" fill="none" stroke="#808000" strokeWidth="1.5" /><rect x="3.5" y="8.5" width="11" height="8" fill="#ffff80" stroke="#444" /><rect x="8" y="11" width="2" height="3" fill="#000" /></>,
  net: <><path d="M3 15l5-7 3 3-2 5z" fill="#c8c8c8" stroke="#555" /><path d="M8 8l8-6M11 11l6-5" stroke="#3050d0" strokeDasharray="1 1" /><circle cx="8" cy="9" r="2" fill="#40b0f0" /></>,
  gems: <><rect x="2" y="3" width="6" height="7" fill="#e0c000" stroke={ink} /><rect x="8" y="1" width="6" height="7" fill="#00a030" stroke={ink} /><rect x="3" y="10" width="6" height="7" fill="#1030c0" stroke={ink} /><rect x="10" y="9" width="6" height="8" fill="#c01010" stroke={ink} /></>,
  finder: <><rect x="2" y="6" width="9" height="6" fill="#fff" stroke="#557" /><rect x="7" y="1" width="10" height="6" fill="#cfcfcf" stroke="#557" /><circle cx="11" cy="10" r="3.5" fill="#a0e0f0" stroke="#124" /><path d="M13.5 12.5l3 3" stroke="#124" strokeWidth="2" /></>,
  money: <><rect x="1.5" y="1.5" width="15" height="15" fill="#fff" stroke={ink} /><rect x="1.5" y="1.5" width="15" height="3" fill="#203080" /><ellipse cx="5.5" cy="12" rx="4" ry="4" fill="#d8c020" stroke={ink} /><path d="M12 6v10M14 7h-3v3h3v3h-3" fill="none" stroke="#1030a0" /></>,
  sheetGray: <><rect x="1.5" y="2.5" width="15" height="13" fill="#c8c8c8" stroke="#aaa" /><path d="M3 6h12M3 9h12M3 12h12M7 5v9M11 5v9" stroke="#eee" /></>,
  sheet: <><rect x="1.5" y="1.5" width="15" height="15" fill="#ffffb0" stroke={ink} /><rect x="1.5" y="1.5" width="15" height="3" fill="#333" /><path d="M4 7h10M4 10h10M4 13h10M9 5v10" stroke={ink} /></>,
  wave: <><path d="M2 13q3-8 7 0t7-2" fill="none" stroke="#c02020" /><path d="M3 8V3M6 6V2M9 6V2M12 8V3M15 8V4" stroke="#3050d0" strokeDasharray="1 1" /><path d="M1 16h16" stroke="#999" /></>,
  updown: <><path d="M5 15V9M5 15l-2-2M5 15l2-2" stroke="#c00000" fill="none" strokeWidth="1.5" /><path d="M12 4v8M12 4l-2 2M12 4l2 2" stroke="#000080" fill="none" strokeWidth="1.5" /><path d="M1 16h15V1" fill="none" stroke="#bbb" /></>,
  charts: <><rect x="7.5" y="1.5" width="9" height="10" fill="#fff" stroke={ink} /><rect x="4.5" y="3.5" width="10" height="10" fill="#fff" stroke={ink} /><rect x="1.5" y="5.5" width="11" height="11" fill="#fff" stroke={ink} /><path d="M3 13l3-3 2 2 3-4" fill="none" stroke="#0040c0" /><path d="M7 15h3" stroke="#c00000" /></>,
  ladder: <><path d="M2 10l7-6 7 4v6H3z" fill="#fff" stroke="#444" /><path d="M4 10v4M7 8v6M10 7v7M13 8v6" stroke="#555" /><path d="M13 3l4-2v4z" fill="#000080" /><path d="M3 16h10" stroke="#3050d0" /></>,
  boxOut: <><path d="M2.5 8.5h11v8h-11z" fill="#fff" stroke={ink} /><path d="M2.5 8.5l4-4h7l-2 4" fill="#222" /><path d="M12 6l5-4v5z" fill="#000080" /></>,
  clock: <><rect x="1.5" y="2.5" width="12" height="12" fill="#fff" stroke={ink} /><rect x="1.5" y="1.5" width="12" height="3" fill="#00a040" /><circle cx="12" cy="12" r="4.5" fill="#fff" stroke={ink} /><path d="M12 9.5V12h2" fill="none" stroke={ink} /><path d="M4 7h2v2H4z" fill="#c00000" /></>,
  search: <><circle cx="7" cy="6" r="4.5" fill="#fff" stroke={ink} /><path d="M7 3v3h2" fill="none" stroke={ink} /><path d="M3 11v5M7 12v5M11 7v8M15 4v9" stroke="#3050a0" strokeWidth="1.5" /></>,
  screen: <><rect x="1" y="1" width="16" height="16" fill="#001000" stroke="#c00000" /><rect x="1" y="1" width="16" height="1.5" fill="#c00000" /><path d="M4 4v8M7 6v6M10 3v8M13 6v6" stroke="#00e040" strokeWidth="1.5" /></>,
  bars: <><path d="M5 9v7M13 3v10" stroke="#000080" strokeWidth="3" /><path d="M1 16V14M8 3h7" stroke="#bbb" /><path d="M5 14h6" stroke="#000080" /></>,
  candle: <><rect x="3.5" y="5.5" width="4" height="8" fill="#000080" stroke="#000080" /><rect x="10.5" y="3.5" width="4" height="9" fill="#fff" stroke="#c00000" /><path d="M5.5 2v14M12.5 1v15" stroke="#555" /></>,
  in: <><path d="M9 2v14" stroke="#3050a0" /><path d="M1 9h5M6 9l-2-2M6 9l-2 2M17 9h-5M12 9l2-2M12 9l2 2" stroke="#222" fill="none" /></>,
  out: <><path d="M2 3v12M16 3v12" stroke="#3050a0" /><path d="M4 9h4M4 9l2-2M4 9l2 2M14 9h-4M14 9l-2-2M14 9l-2 2" stroke="#222" fill="none" /></>,
  zoomIn: <><circle cx="7.5" cy="7.5" r="5.5" fill="#fff" stroke="#203040" strokeWidth="1.5" /><path d="M5 7.5h5M7.5 5v5" stroke="#000" strokeWidth="1.5" /><path d="M12 12l5 5" stroke="#2040a0" strokeWidth="2.5" /></>,
  zoomOut: <><circle cx="7.5" cy="7.5" r="5.5" fill="#eee" stroke="#bbb" strokeWidth="1.5" /><path d="M5 7.5h5" stroke="#bbb" strokeWidth="1.5" /><path d="M12 12l5 5" stroke="#bbb" strokeWidth="2.5" /></>,
  arrow: <path d="M5 1.5v13l3-3 2.5 5 2-1-2.5-5h4z" fill="#fff" stroke={ink} />,
  track: <><rect x="1" y="2" width="14" height="12" fill="#001010" /><rect x="1" y="1" width="14" height="2" fill="#0000c0" /><path d="M3 10l3-3 2 2 3-3" fill="none" stroke="#00e040" /><path d="M11 9h6M14 9v8" stroke="#000" strokeWidth="2.5" /></>,
  tools: <><path d="M3 16L15 4" stroke="#806020" strokeWidth="2" /><path d="M3 3l12 12" stroke="#c09000" strokeWidth="2" /><path d="M1 5l4-4 3 3-4 4z" fill="#303030" /></>,
  docs: <><rect x="6.5" y="1.5" width="10" height="11" fill="#ffff90" stroke={ink} /><path d="M9 4h2M13 4h2M9 7h2M13 7h2M9 10h2M13 10h2" stroke={ink} /><rect x="2.5" y="9.5" width="9" height="7" fill="#fff" stroke="#000080" /><path d="M4 5h4M6 3v4" stroke="#0040e0" strokeWidth="2" /></>,
  noteGray: <><path d="M4 2.5h11v10h-4l-2 3v-3H4z" fill="#e8e8e8" stroke="#bbb" /><path d="M6 5h7M6 7h7M6 9h7" stroke="#bbb" /></>,
  trend: <><path d="M3 16L15 2" stroke="#222" /><path d="M9 5l4 4" stroke="#222" /></>,
  vlines: <path d="M3 2v14M6 2v14M9 2v14M12 2v14M15 2v14" stroke="#222" />,
  hlines: <path d="M2 3h14M2 9h14M2 15h14" stroke="#222" />,
  hcalc: <><path d="M2 2h14M2 4h14M2 6h14" stroke="#222" /><rect x="4.5" y="7.5" width="9" height="9" fill="#4060c0" stroke="#000080" /><path d="M6 10h6M6 13h6" stroke="#fff" /></>,
  fan: <path d="M2 15Q4 4 16 3M2 15Q6 7 16 7M2 15Q8 10 16 11M2 15h14" fill="none" stroke="#222" strokeDasharray="2 1" />,
  fib: <path d="M2 15L15 3M2 15h14M6 15l6-9M10 15l3-5" fill="none" stroke="#222" strokeDasharray="2 1" />,
  steps: <path d="M2 16q6-2 8-12M10 3h6M10 6h6M10 9h5M10 12h4" fill="none" stroke="#222" />,
  triple: <path d="M3 2l5 6v8M7 2l4 6v8M11 2l4 6v8" fill="none" stroke="#222" />,
  angle: <path d="M2 15L14 3M2 15h14M6 15l5-5M10 15l3-3" fill="none" stroke="#222" strokeDasharray="2 1" />,
  horiz: <path d="M1 9h16M1 9l3-3M1 9l3 3M17 9l-3-3M17 9l-3 3" fill="none" stroke="#222" strokeWidth="1.2" />,
  channel: <path d="M3 15L12 3M6 15L15 3M9 15L17 5" stroke="#222" strokeDasharray="2 1" fill="none" />,
  arc: <path d="M2 16V9q0-6 7-6t7 6v7M5 16q0-9 4-9t4 9" fill="none" stroke="#222" />,
  pen: <><path d="M1 16h9" stroke="#222" /><path d="M9 15q1-6 7-13" stroke="#d09000" strokeWidth="2.5" /><path d="M15 1l2 1" stroke="#c00000" strokeWidth="2" /></>,
  curve: <path d="M2 16q9-1 10-12" fill="none" stroke="#222" />,
  red: <path d="M9 2v10M5 10l4 6 4-6z" fill="#e00000" stroke="#e00000" strokeWidth="2" />,
  blue: <path d="M9 16V7M5 8l4-6 4 6z" fill="#0000e0" stroke="#0000e0" strokeWidth="1.5" />,
  circle: <circle cx="9" cy="9" r="7" fill="none" stroke="#222" />,
  rect: <rect x="3.5" y="1.5" width="11" height="15" fill="none" stroke="#222" />,
};

function Tool({ name }: { name: string }) {
  return (
    <div className="flex h-[24px] w-[23px] flex-none items-center justify-center">
      <svg width="18" height="18" viewBox="0 0 18 18">{icons[name]}</svg>
    </div>
  );
}

function Sep() {
  return (
    <div className="flex h-[24px] w-[8px] flex-none justify-center">
      <div className="h-full w-px bg-[#a0a0a0]" />
    </div>
  );
}

function Grip() {
  return <div className="h-[26px] w-[8px] flex-none bg-[radial-gradient(#9a9a9a_1px,transparent_1px)] [background-repeat:repeat-y] [background-size:3px_4px]" />;
}

function Toolbar() {
  return (
    <div className="flex h-[32px] items-center border-b-2 border-t border-b-[#a8a8a8] border-t-[#c8c8d0] bg-[#f1f1f1] pl-[31.5px]">
      {["doc", "open", "stack", "mail", "box"].map((n) => <Tool key={n} name={n} />)}
      <Sep />
      {["print", "printer"].map((n) => <Tool key={n} name={n} />)}
      <Sep />
      {["winNew", "winColor", "lock", "net", "gems"].map((n) => <Tool key={n} name={n} />)}
      <Sep />
      <div className="flex h-[24px] w-[136px] flex-none items-center justify-between rounded-[2px] border border-[#d0d0d0] bg-white pl-[3px] pr-[4px] font-['Liberation_Sans',sans-serif] text-[13.5px] text-[#808080]">
        <span className="whitespace-nowrap">Type a symbol/co</span>
        <svg width="9" height="6" viewBox="0 0 9 6"><path d="M0 0h9L4.5 6z" fill="#000" /></svg>
      </div>
      <div className="flex w-[20px] flex-none justify-center">
        <svg width="6" height="10" viewBox="0 0 6 10"><path d="M0 0l6 5-6 5z" fill="#000" /></svg>
      </div>
      <div className="ml-[6px]"><Tool name="finder" /></div>
      <div className="ml-[13px]"><Grip /></div>
      {["money", "sheetGray", "sheet"].map((n) => <Tool key={n} name={n} />)}
      <Sep />
      {["wave", "updown", "charts"].map((n) => <Tool key={n} name={n} />)}
      <Sep />
      {["ladder", "boxOut"].map((n) => <Tool key={n} name={n} />)}
      <Sep />
      {["clock", "search", "screen", "bars", "candle"].map((n) => <Tool key={n} name={n} />)}
      <Sep />
      {["in", "out"].map((n) => <Tool key={n} name={n} />)}
      <Sep />
      {["zoomIn", "zoomOut"].map((n) => <Tool key={n} name={n} />)}
      <Sep />
      <div className="h-[24px] w-[23px] flex-none border border-[#c8c8c8] bg-[#fafafa]"><Tool name="arrow" /></div>
      <Tool name="track" />
      <Sep />
      <Tool name="tools" />
      <Sep />
      <Tool name="docs" />
      <div className="ml-[8px]"><Tool name="noteGray" /></div>
      <div className="ml-[24px]"><Grip /></div>
      <div className="-ml-[1px] flex">
        {["trend", "vlines", "hlines", "hcalc", "fan", "fib", "steps", "triple", "angle", "horiz", "channel", "arc", "pen"].map((n) => <Tool key={n} name={n} />)}
      </div>
      <Sep />
      {["curve", "red", "blue", "circle", "rect"].map((n) => <Tool key={n} name={n} />)}
      <span className="ml-[4px] font-['Liberation_Sans',sans-serif] text-[12px] text-black">abc</span>
    </div>
  );
}

function ScrollRow() {
  return (
    <div className="flex h-[23px] items-center justify-between bg-[#f0f0f0] px-[8px]">
      <svg width="6" height="10" viewBox="0 0 6 10"><path d="M6 0L0 5l6 5z" fill="#606060" /></svg>
      <div className="flex items-center gap-[7px]">
        <div className="flex h-[19px] w-[19px] items-center justify-center gap-[1px] border border-[#a0a0a0] bg-[linear-gradient(90deg,#f2f2f2,#d0d0d0)]">
          <span className="h-[9px] w-px bg-[#666]" />
          <span className="h-[9px] w-px bg-[#666]" />
          <span className="h-[9px] w-px bg-[#666]" />
        </div>
        <svg width="6" height="10" viewBox="0 0 6 10"><path d="M0 0l6 5-6 5z" fill="#606060" /></svg>
      </div>
    </div>
  );
}

function TabCap({ side, active }: { side: "l" | "r"; active: boolean }) {
  const fill = active ? "#ffffff" : "#f0f0f0";
  return (
    <svg width="6" height="17" viewBox="0 0 6 17" className="block flex-none">
      {side === "l" ? (
        <><path d="M0 0l5 17h1V0z" fill={fill} /><path d="M0 0l5 17" stroke="#333" fill="none" /></>
      ) : (
        <><path d="M6 0l-5 17H0V0z" fill={fill} /><path d="M6 0l-5 17" stroke="#333" fill="none" /></>
      )}
    </svg>
  );
}

const tabs: [string, string][] = [
  ["STOX_TF60", "w-[65px]"], ["STOX_TF120", "w-[72px]"], ["STOX TF240", "w-[69px]"], ["STOX _100", "w-[61px]"], ["STOX_TF30", "w-[67px]"],
  ["FIB_TF60", "w-[53px]"], ["FIB_TF120", "w-[60px]"], ["FIB TF240", "w-[57px]"], ["FIB_100", "w-[47px]"], ["FIB_TF30", "w-[53px]"],
  ["BUND vs STOXX", "w-[91px]"], ["FIB Frame bassi", "w-[91px]"], ["FIB Giornaliero", "w-[80px]"], ["STOXX frame bassi", "w-[108px]"],
  ["STOXX giornaliero", "w-[100px]"], ["No PREZZI", "w-[62px]"], ["ANNUALE Indici", "w-[88px]"],
];

function TabsRow() {
  return (
    <div className="flex h-[18px] border-y border-t-black border-b-[#404040] bg-[#f0f0f0] font-['Roboto',sans-serif] text-[12.2px] text-black">
      <div className="flex w-[72px] flex-none">
        {["M9 1v8L4 5zM3 1v8", "M8 1v8L3 5z", "M3 1v8l5-4z", "M2 1v8l5-4zM8 1v8"].map((d) => (
          <div key={d} className="flex h-full w-[14px] items-center justify-center border border-[#c0c0c0] bg-[#e6e6e6]">
            <svg width="10" height="10" viewBox="0 0 10 10"><path d={d} fill="#606060" stroke="#606060" strokeWidth="0.6" /></svg>
          </div>
        ))}
      </div>
      <div className="flex">
        {tabs.map(([t, w]) => {
          const active = t === "FIB Frame bassi";
          return (
            <div key={t} className="mr-[4px] flex flex-none">
              <TabCap side="l" active={active} />
              <div className={`flex flex-none pl-[5px] pr-[1px] ${active ? "bg-white font-bold" : ""}`}>
                <span className={`${w} whitespace-nowrap text-center leading-[15px]`}>{t}</span>
              </div>
              <TabCap side="r" active={active} />
            </div>
          );
        })}
      </div>
    </div>
  );
}

const statusCells: [string, string, string][] = [
  ["Acct:", "w-[53px]", "text-black"],
  ["Open Psns:", "w-[91px]", "text-black"],
  ["DT BP:", "w-[62px]", "text-black"],
  ["Purch Pwr:", "w-[88px]", "text-black"],
  ["Closed P/L:", "w-[92px]", "text-black"],
  ["RT TE:", "w-[55px]", "text-black"],
  ["Open P/L:", "w-[89px]", "text-black"],
  ["ORDER BAR", "w-[89px]", "text-[#008000]"],
  ["MACROS", "w-[69px]", "text-[#008000]"],
];

function StatusBar() {
  return (
    <div className="flex h-[21px] items-center bg-[#f0f0f0] pl-[3px] font-['Roboto',sans-serif] text-[14px] text-black">
      <span className="whitespace-nowrap">For Help, press F1</span>
      <div className="ml-auto flex h-full items-center">
        {statusCells.map(([t, w, c]) => (
          <div key={t} className={`flex h-full flex-none items-center border-r border-[#c8c8c8] pl-[5px] ${w} ${c}`}>
            <span className="whitespace-nowrap">{t}</span>
          </div>
        ))}
        <div className="flex h-full w-[17px] flex-none items-center justify-center border-r border-[#c8c8c8]">
          <span className="h-[10px] w-[10px] rounded-full bg-[radial-gradient(circle_at_35%_35%,#ff9a9a,#d00000_60%,#800000)]" />
        </div>
        <span className="w-[124px] flex-none whitespace-nowrap pl-[6px]">17/05/2022 08:26</span>
      </div>
    </div>
  );
}

export default function App() {
  return (
    <div className="h-[1080px] w-[1920px] overflow-hidden bg-[#f0f0f0] font-['Liberation_Sans',Arial,sans-serif]">
      <TitleBar />
      <MenuBar />
      <Toolbar />
      <div className="border-l border-[#808080] bg-[#020205]">
        <TopPanel />
        <MidPanel />
        <LowPanel />
        <TimeAxis />
      </div>
      <ScrollRow />
      <TabsRow />
      <StatusBar />
    </div>
  );
}
